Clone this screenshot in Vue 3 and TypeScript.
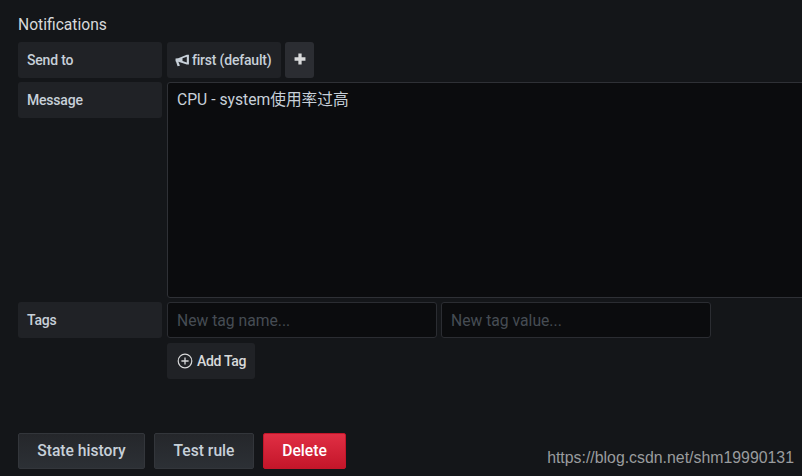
<script setup lang="ts">
const title: string = 'Notifications'
</script>

<template>
  <div class="page">
    <h5 class="title">{{ title }}</h5>
    <div class="row">
      <div class="label">Send to</div>
      <div class="box channel">
        <svg class="horn" viewBox="0 0 14 12" width="15" height="13">
          <path d="M0.5 4.2 L3 3.8 L11 0.6 L13 0.6 L13 9.8 L11 9.8 L3.2 7.2 L3.2 7.4 L4.6 11 L2.4 11.4 L1 7.2 L0.5 6.8 Z M11 2.4 L7 3.9 L7 6.4 L11 7.9 Z" fill-rule="evenodd" fill="#c7d0d9" />
        </svg>
        <span>first (default)</span>
      </div>
      <div class="plus">
        <svg viewBox="0 0 11 11" width="12" height="12"><path d="M4 0.5h3v3.5h3.5v3H7v3.5H4V7H0.5V4H4z" fill="#d8d9da" /></svg>
      </div>
    </div>
    <div class="row message-row">
      <div class="label">Message</div>
      <div class="textarea">CPU - system使用率过高</div>
    </div>
    <div class="row">
      <div class="label">Tags</div>
      <input class="input" placeholder="New tag name..." />
      <input class="input value" placeholder="New tag value..." />
    </div>
    <div class="add-wrap">
      <div class="box add">
        <svg viewBox="0 0 16 16" width="16" height="16" fill="none" stroke="#d8d9da">
          <circle cx="8" cy="8" r="6.8" stroke-width="1.2" />
          <path d="M8 4.4v7.2M4.4 8h7.2" stroke-width="1.3" />
        </svg>
        <span>Add Tag</span>
      </div>
    </div>
    <div class="actions">
      <button class="btn history">State history</button>
      <button class="btn test">Test rule</button>
      <button class="btn del">Delete</button>
      <span class="mark">https://blog.csdn.net/shm19990131</span>
    </div>
  </div>
</template>

<style>
html, body { margin: 0; background: #141619; overflow: hidden; }
</style>

<style scoped>
.page {
  position: relative;
  width: 802px;
  height: 476px;
  box-sizing: border-box;
  padding: 15px 0 0 18px;
  background: #141619;
  font-family: Roboto, "Noto Sans CJK SC", sans-serif;
  font-size: 14px;
  letter-spacing: -0.2px;
  color: #c7d0d9;
  overflow: hidden;
}
.title {
  margin: 0 0 7px;
  font-size: 15.65px;
  letter-spacing: 0;
  line-height: 20px;
  font-weight: 400;
  color: #d8d9da;
}
.row {
  display: flex;
  height: 36px;
  margin-bottom: 4px;
}
.label {
  width: 144px;
  flex: none;
  height: 36px;
  margin-right: 5px;
  padding-left: 9px;
  box-sizing: border-box;
  background: #202226;
  border-radius: 3px;
  line-height: 36px;
  font-weight: 500;
  color: #c7d0d9;
}
.box {
  display: flex;
  align-items: center;
  height: 36px;
  box-sizing: border-box;
  background: #202226;
  border-radius: 3px;
  font-weight: 500;
}
.channel {
  width: 114px;
  padding-left: 8px;
  gap: 2px;
  color: #c7d0d9;
  white-space: nowrap;
}
.horn { flex: none; }
.plus {
  display: flex;
  align-items: center;
  justify-content: center;
  width: 29px;
  height: 36px;
  margin-left: 4px;
  padding-bottom: 2px;
  box-sizing: border-box;
  background: #2b2d32;
  border-radius: 3px;
}
.message-row {
  height: 216px;
  margin-bottom: 4px;
  width: 900px;
}
.textarea {
  width: 700px;
  height: 216px;
  box-sizing: border-box;
  padding: 6px 9px;
  background: #0b0c0e;
  border: 1px solid #2f3136;
  border-radius: 3px 0 0 3px;
  font-size: 15.7px;
  letter-spacing: 0;
  line-height: 21px;
  color: #c7d0d9;
}
.input {
  width: 270px;
  height: 36px;
  box-sizing: border-box;
  padding: 0 9px;
  background: #0b0c0e;
  border: 1px solid #2b2d32;
  border-radius: 3px;
  font-family: inherit;
  font-size: 15.7px;
  letter-spacing: 0;
  color: #c7d0d9;
  outline: none;
}
.input::placeholder { color: #464c54; opacity: 1; }
.value { margin-left: 4px; }
.add-wrap {
  margin: 5px 0 0 149px;
}
.add {
  width: 88px;
  padding-left: 10px;
  gap: 4px;
  letter-spacing: -0.3px;
  color: #d8d9da;
}
.actions {
  display: flex;
  margin-top: 54px;
  gap: 9px;
}
.btn {
  height: 36px;
  box-sizing: border-box;
  padding: 0 0 2px;
  border-radius: 2px;
  font-family: inherit;
  font-size: 15.65px;
  letter-spacing: 0;
  font-weight: 500;
}
.history, .test {
  background: linear-gradient(180deg, #25272b, #2c3035);
  border: 1px solid #33363b;
  color: #c7d0d9;
}
.history { width: 127px; }
.test { width: 100px; }
.del {
  width: 83px;
  background: linear-gradient(180deg, #e02f44, #c4162a);
  border: 1px solid #c4162a;
  color: #fff;
}
.mark {
  position: absolute;
  right: 8px;
  bottom: 8px;
  font-family: "Liberation Sans", sans-serif;
  font-size: 15.87px;
  letter-spacing: 0;
  line-height: 20px;
  color: #9a9c9e;
}
</style>
